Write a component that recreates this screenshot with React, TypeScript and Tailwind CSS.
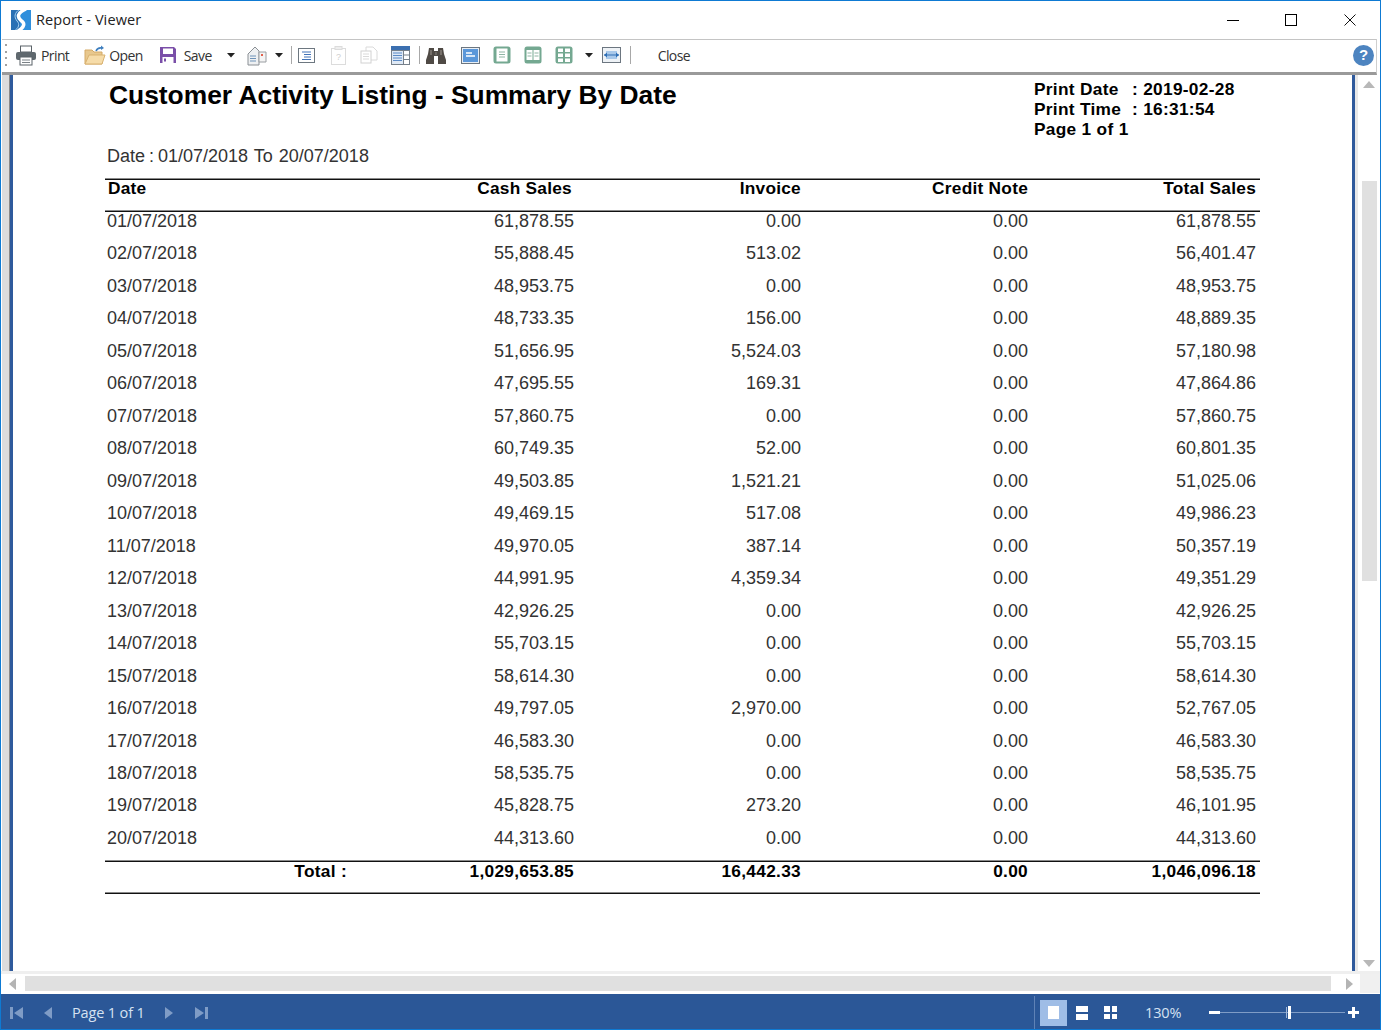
import React from "react";

const rows: string[][] = [
  ["01/07/2018", "61,878.55", "0.00", "0.00", "61,878.55"],
  ["02/07/2018", "55,888.45", "513.02", "0.00", "56,401.47"],
  ["03/07/2018", "48,953.75", "0.00", "0.00", "48,953.75"],
  ["04/07/2018", "48,733.35", "156.00", "0.00", "48,889.35"],
  ["05/07/2018", "51,656.95", "5,524.03", "0.00", "57,180.98"],
  ["06/07/2018", "47,695.55", "169.31", "0.00", "47,864.86"],
  ["07/07/2018", "57,860.75", "0.00", "0.00", "57,860.75"],
  ["08/07/2018", "60,749.35", "52.00", "0.00", "60,801.35"],
  ["09/07/2018", "49,503.85", "1,521.21", "0.00", "51,025.06"],
  ["10/07/2018", "49,469.15", "517.08", "0.00", "49,986.23"],
  ["11/07/2018", "49,970.05", "387.14", "0.00", "50,357.19"],
  ["12/07/2018", "44,991.95", "4,359.34", "0.00", "49,351.29"],
  ["13/07/2018", "42,926.25", "0.00", "0.00", "42,926.25"],
  ["14/07/2018", "55,703.15", "0.00", "0.00", "55,703.15"],
  ["15/07/2018", "58,614.30", "0.00", "0.00", "58,614.30"],
  ["16/07/2018", "49,797.05", "2,970.00", "0.00", "52,767.05"],
  ["17/07/2018", "46,583.30", "0.00", "0.00", "46,583.30"],
  ["18/07/2018", "58,535.75", "0.00", "0.00", "58,535.75"],
  ["19/07/2018", "45,828.75", "273.20", "0.00", "46,101.95"],
  ["20/07/2018", "44,313.60", "0.00", "0.00", "44,313.60"],
];

const Caret = ({ cls }: { cls: string }) => (
  <svg width="8" height="5" viewBox="0 0 8 5" className={cls}><path d="M0 0h8L4 4.5z" fill="#222" /></svg>
);

const Sep = ({ cls }: { cls: string }) => <div className={`h-[18px] w-px bg-[#a8a8a8] ${cls}`} />;

const Frame = ({ cls, fill, children }: { cls: string; fill: string; children?: React.ReactNode }) => (
  <svg width="18" height="18" viewBox="0 0 18 18" className={cls}>
    <rect x="0.5" y="0.5" width="17" height="17" rx="2.5" fill={fill} />
    {children}
  </svg>
);

const Toolbar = () => (
  <div className="h-[36px] ml-px mr-[3px] pb-[2px] border-t border-t-[#c4c4c4] border-b-[3px] border-b-[#9a9a9a] border-r border-r-[#cfcfcf] flex items-center bg-white text-[#333] text-[14px] tracking-[-0.6px] shrink-0">
    <div className="w-[3px] h-[22px] ml-[3px] flex flex-col justify-between">
      {[0, 1, 2, 3].map((i) => <div key={i} className="w-[2px] h-[2px] bg-[#a0a0a0]" />)}
    </div>
    {/* print */}
    <svg width="22" height="21" viewBox="0 0 22 21" className="ml-[7px]">
      <rect x="5.5" y="1" width="11" height="6" fill="#fff" stroke="#5a6268" />
      <rect x="1" y="7" width="20" height="8" rx="2" fill="#5f686e" />
      <rect x="5" y="12" width="12" height="8" fill="#fff" stroke="#5a6268" />
      <path d="M7 15h8M7 17.500h8" stroke="#7b8287" />
    </svg>
    <span className="ml-[4px]">Print</span>
    {/* open */}
    <svg width="22" height="21" viewBox="0 0 22 21" className="ml-[15px]">
      <path d="M1 5h7l2 2h8v12H1z" fill="#e8c88e" stroke="#d5aa66" />
      <path d="M1 19 5 10h16l-3 9z" fill="#f6dca9" stroke="#d9b271" />
      <path d="M12 6c1-2.500 3-3.500 6-3" fill="none" stroke="#3f7fbf" strokeWidth="1.500" />
      <path d="M17 0.500l3 2.500-3 2z" fill="#3f7fbf" />
    </svg>
    <span className="ml-[3px]">Open</span>
    {/* save */}
    <svg width="18" height="18" viewBox="0 0 18 18" className="ml-[16px]">
      <path d="M1 1h14l2 2v14H1z" fill="#7a4fa8" />
      <rect x="4" y="2.500" width="10" height="5.500" fill="#fff" />
      <rect x="3.500" y="11" width="11" height="6" fill="#fff" />
      <rect x="5" y="12.500" width="2" height="3" fill="#7a4fa8" />
    </svg>
    <span className="ml-[7px]">Save</span>
    <Caret cls="ml-[15px]" />
    {/* export */}
    <svg width="22" height="21" viewBox="0 0 22 21" className="ml-[11px]">
      <path d="M2 9 9 2l4 4v14H2z" fill="#eef0f2" stroke="#8a8f94" />
      <path d="M13 7h7v10h-7z" fill="#f4f4f4" stroke="#9a9ea2" />
      <rect x="15" y="9" width="2" height="2" fill="#e2604c" />
      <path d="M4 11h6M4 13.500h6M4 16h6" stroke="#6f93b8" />
    </svg>
    <Caret cls="ml-[7px]" />
    <Sep cls="ml-[8px]" />
    {/* toc */}
    <svg width="17" height="15" viewBox="0 0 17 15" className="ml-[6px]">
      <rect x="0.500" y="0.500" width="16" height="14" fill="#fff" stroke="#6d7780" />
      <path d="M4 4h9M6 6.500h7M6 9h7M4 11.500h9" stroke="#4273b8" />
    </svg>
    {/* parameter */}
    <svg width="15" height="19" viewBox="0 0 15 19" className="ml-[16px]">
      <rect x="0.500" y="2.500" width="14" height="16" fill="#fff" stroke="#dcdcdc" />
      <rect x="4" y="0.500" width="7" height="3" fill="#eee" stroke="#dcdcdc" />
      <text x="5" y="14" fontSize="9" fill="#cfcfcf" fontFamily="Liberation Sans">?</text>
    </svg>
    {/* copy */}
    <svg width="18" height="18" viewBox="0 0 18 18" className="ml-[14px]">
      <path d="M6 1h7l4 4v9H6z" fill="#fff" stroke="#dadada" />
      <rect x="1" y="5" width="10" height="12" fill="#fff" stroke="#d2d2d2" />
      <path d="M3 8h6M3 10.500h6M3 13h6" stroke="#dadada" />
    </svg>
    {/* table */}
    <svg width="19" height="19" viewBox="0 0 19 19" className="ml-[13px]">
      <rect x="0" y="0" width="19" height="19" fill="#76808a" />
      <rect x="0" y="0" width="19" height="4" fill="#3b6fb0" />
      <rect x="1" y="5" width="11" height="13" fill="#dfe9f5" />
      <path d="M2 7h9M2 9.500h9M2 12h9M2 14.500h9" stroke="#5a8ac6" />
      <rect x="13" y="5" width="5" height="3.500" fill="#fff" />
      <rect x="13" y="9.500" width="5" height="3.500" fill="#fff" />
      <rect x="13" y="14" width="5" height="4" fill="#fff" />
    </svg>
    <Sep cls="ml-[9px]" />
    {/* binoculars */}
    <svg width="20" height="17" viewBox="0 0 20 17" className="ml-[6px]">
      <path d="M3 1h5v3h4V1h5l1 6 2 6v4h-8V9H8v8H0v-4l2-6z" fill="#4f4a45" />
      <path d="M9.500 5h1v3h-1z" fill="#8a8580" />
      <path d="M4 3h2v5H4zM14 3h2v5h-2z" fill="#77716b" />
    </svg>
    {/* view icons */}
    <svg width="19" height="17" viewBox="0 0 19 17" className="ml-[15px]">
      <rect x="0.500" y="0.500" width="18" height="16" fill="#e8eef5" stroke="#6c7680" />
      <rect x="2" y="2" width="15" height="13" fill="#5b97d9" />
      <path d="M5 6h6M5 9h9" stroke="#fff" strokeWidth="1.500" />
    </svg>
    <Frame cls="ml-[13px]" fill="#74a891">
      <rect x="3.500" y="2.500" width="11" height="13" fill="#fff" />
      <path d="M6 6h6M6 8.500h6M6 11h6" stroke="#8fb5a4" />
    </Frame>
    <Frame cls="ml-[13px]" fill="#74a891">
      <rect x="2.500" y="4" width="6" height="10" fill="#fff" />
      <rect x="9.500" y="4" width="6" height="10" fill="#fff" />
      <path d="M3.500 7h4M3.500 10h4M10.500 7h4M10.500 10h4" stroke="#8fb5a4" />
    </Frame>
    <Frame cls="ml-[13px]" fill="#74a891">
      <rect x="3" y="2.500" width="5" height="3.500" fill="#fff" />
      <rect x="10" y="2.500" width="5" height="3.500" fill="#fff" />
      <rect x="3" y="7.500" width="5" height="3.500" fill="#fff" />
      <rect x="10" y="7.500" width="5" height="3.500" fill="#fff" />
      <rect x="3" y="12.500" width="5" height="3.500" fill="#fff" />
      <rect x="10" y="12.500" width="5" height="3.500" fill="#fff" />
    </Frame>
    <Caret cls="ml-[12px]" />
    <svg width="19" height="16" viewBox="0 0 19 16" className="ml-[9px]">
      <rect x="0.500" y="0.500" width="18" height="15" fill="#eef2f6" stroke="#6c7680" />
      <rect x="4" y="4" width="11" height="8" fill="#a8c8ea" />
      <path d="M2 8h15" stroke="#2f6fb5" />
      <path d="M5 5.500 2 8l3 2.500zM14 5.500 17 8l-3 2.500z" fill="#2f6fb5" />
    </svg>
    <Sep cls="ml-[9px]" />
    <span className="ml-[27px]">Close</span>
    <div className="ml-auto mr-[2px] w-[21px] h-[21px] rounded-full bg-[#4d84c0] text-white flex items-center justify-center font-bold text-[15px] font-['Liberation_Sans'] tracking-normal">?</div>
  </div>
);

const cols = "grid grid-cols-[240px_229px_227px_227px_228px]";

const Report = () => (
  <div className="font-['Liberation_Sans',sans-serif] text-[#222] pl-[92px] pr-[92px]">
    <div className="flex justify-between">
      <h1 className="ml-[4px] mt-[1px] text-[26.390px] leading-[38px] font-bold text-black">
        Customer Activity Listing - Summary By Date
      </h1>
      <div className="mt-[4px] mr-[25px] w-[201px] text-[17.300px] leading-[20px] font-bold text-black tracking-[0.3px] whitespace-nowrap">
        <div className="flex"><span className="w-[98px]">Print Date</span><span>:&nbsp;2019-02-28</span></div>
        <div className="flex"><span className="w-[98px]">Print Time</span><span>:&nbsp;16:31:54</span></div>
        <div>Page 1 of 1</div>
      </div>
    </div>
    <div className="ml-[2px] mt-[5px] text-[18px] leading-[24px] text-[#333]">
      <span className="[word-spacing:-1px]">Date : </span>
      <span className="[word-spacing:1px]">01/07/2018 To 20/07/2018</span>
    </div>
    <div className={`mt-[11px] h-[33px] border-y border-[#111] shadow-[0_-1px_0_#8a8a8a,inset_0_-1px_0_#8a8a8a] ${cols} text-[17.300px] leading-[17px] font-bold text-black tracking-[0.25px]`}>
      <div className="pl-[3px]">Date</div>
      <div className="text-right pr-[2px]">Cash Sales</div>
      <div className="text-right">Invoice</div>
      <div className="text-right">Credit Note</div>
      <div className="text-right">Total Sales</div>
    </div>
    <div className="flex flex-col">
      {rows.map((r) => (
        <div key={r[0]} className={`h-[32.470px] ${cols} text-[18px] leading-[18px] text-[#333]`}>
          <div className="pl-[2px]">{r[0]}</div>
          <div className="text-right">{r[1]}</div>
          <div className="text-right">{r[2]}</div>
          <div className="text-right">{r[3]}</div>
          <div className="text-right">{r[4]}</div>
        </div>
      ))}
    </div>
    <div className="h-[33px] border-y border-[#111] shadow-[inset_0_-1px_0_#8a8a8a,0_-1px_0_#8a8a8a] grid grid-cols-[242px_227px_227px_227px_228px] text-[17.300px] leading-[18px] font-bold text-black tracking-[0.3px]">
      <div className="text-right">Total :</div>
      <div className="text-right">1,029,653.85</div>
      <div className="text-right">16,442.33</div>
      <div className="text-right">0.00</div>
      <div className="text-right">1,046,096.18</div>
    </div>
  </div>
);

const Tri = ({ d, cls }: { d: string; cls: string }) => (
  <svg width="10" height="14" viewBox="0 0 10 14" className={cls}><path d={d} fill="#b4b4b4" /></svg>
);

export default function App() {
  return (
    <div className="w-[1381px] h-[1030px] overflow-hidden flex flex-col bg-white border border-[#0e7ad3] font-['Open_Sans',sans-serif]">
      {/* title */}
      <div className="h-[38px] flex items-center shrink-0 relative">
        <svg width="20" height="20" viewBox="0 0 20 20" className="ml-[10px]">
          <rect width="20" height="20" fill="#2f8fdc" />
          <path d="M0 0h9v20H0z" fill="#2a70b4" />
          <path d="M15 -1C6 3 6 7 10 10.500 14 13 14 17 7 21" fill="none" stroke="#fff" strokeWidth="3.500" />
          <path d="M9 -1C3 3 3 7 6 11 9 14 8 18 3 21" fill="none" stroke="#a9d0ef" strokeWidth="1" />
        </svg>
        <span className="ml-[5px] text-[14.500px] text-[#222] tracking-[0.1px]">Report - Viewer</span>
        <div className="ml-auto flex items-center">
          <div className="w-[12px] h-px bg-black mr-[46px]" />
          <div className="w-[12px] h-[12px] border border-black mr-[47px]" />
          <svg width="12" height="12" viewBox="0 0 12 12" className="mr-[24px]"><path d="M0.500 0.500l11 11M11.500 0.500l-11 11" stroke="#111" /></svg>
        </div>
      </div>
      <Toolbar />
      {/* middle */}
      <div className="flex-1 flex min-h-0">
        <div className="w-[11px] ml-px flex shrink-0">
          <div className="w-[7px] bg-[#dcdcdc]" />
          <div className="w-px bg-[#8a8a8a]" />
          <div className="w-[3px] bg-[#2f5a9c]" />
        </div>
        <div className="flex-1 bg-white overflow-hidden min-w-0"><Report /></div>
        <div className="w-[3px] bg-[#2f5a9c] shrink-0" />
        <div className="w-[3px] bg-[#e8e8e8] shrink-0" />
        <div className="w-[22px] shrink-0 bg-white flex flex-col items-center">
          <svg width="12" height="7" viewBox="0 0 12 7" className="mt-[6px]"><path d="M6 0l6 7H0z" fill="#b8b8b8" /></svg>
          <div className="w-[15px] h-[400px] bg-[#e0e0e0] mt-[93px]" />
          <svg width="12" height="7" viewBox="0 0 12 7" className="mt-auto mb-[4px]"><path d="M0 0h12L6 7z" fill="#b8b8b8" /></svg>
        </div>
      </div>
      {/* hscroll */}
      <div className="h-[22px] shrink-0 flex items-center bg-white border-t-[3px] border-[#efefef]">
        <Tri d="M8 1v12L1 7z" cls="ml-[7px]" />
        <div className="ml-[7px] w-[1306px] h-[15px] bg-[#e0e0e0]" />
        <Tri d="M2 1v12l7-6z" cls="ml-[13px]" />
        <div className="ml-auto w-[20px] self-stretch bg-[#f0f0f0]" />
      </div>
      {/* status */}
      <div className="h-[36px] shrink-0 bg-[#2b5797] flex items-center text-[#d6e2f2] text-[14.500px] tracking-[-0.15px] border-t border-white pt-[2px]">
        <svg width="14" height="14" viewBox="0 0 14 14" className="ml-[9px]"><path d="M0 1h3v12H0zM13 1v12L4 7z" fill="#7f9cc6" /></svg>
        <svg width="9" height="14" viewBox="0 0 9 14" className="ml-[19px]"><path d="M9 1v12L1 7z" fill="#7f9cc6" /></svg>
        <span className="ml-[20px]">Page 1 of 1</span>
        <svg width="9" height="14" viewBox="0 0 9 14" className="ml-[20px]"><path d="M0 1v12l8-6z" fill="#7f9cc6" /></svg>
        <svg width="14" height="14" viewBox="0 0 14 14" className="ml-[21px]"><path d="M0 1v12l9-6zM10 1h3v12h-3z" fill="#7f9cc6" /></svg>
        <div className="ml-auto w-px h-[33px] bg-[#5f82b6] mr-[5px]" />
        <div className="w-[27px] h-[26px] bg-[#9fbde6] flex items-center justify-center mr-[9px]">
          <div className="w-[11px] h-[13px] bg-white" />
        </div>
        <div className="w-[12px] flex flex-col gap-[2px] mr-[16px]">
          <div className="h-[6px] bg-white" /><div className="h-[6px] bg-white" />
        </div>
        <div className="w-[13px] grid grid-cols-2 gap-[2px] mr-[28px]">
          {[0, 1, 2, 3].map((i) => <div key={i} className="h-[5.500px] bg-white" />)}
        </div>
        <span className="w-[52px]">130%</span>
        <div className="w-[11px] h-[3px] bg-white ml-[12px]" />
        <div className="w-[125px] h-px bg-[#7f9cc6] relative">
          <div className="absolute left-[66px] top-[-5px] w-px h-[11px] bg-[#9fb6d8]" />
          <div className="absolute left-[68px] top-[-6px] w-[3px] h-[13px] bg-white" />
        </div>
        <div className="ml-[3px] mr-[21px] w-[11px] h-[11px] relative">
          <div className="absolute left-0 top-[4px] w-[11px] h-[3px] bg-white" />
          <div className="absolute left-[4px] top-0 w-[3px] h-[11px] bg-white" />
        </div>
      </div>
    </div>
  );
}
